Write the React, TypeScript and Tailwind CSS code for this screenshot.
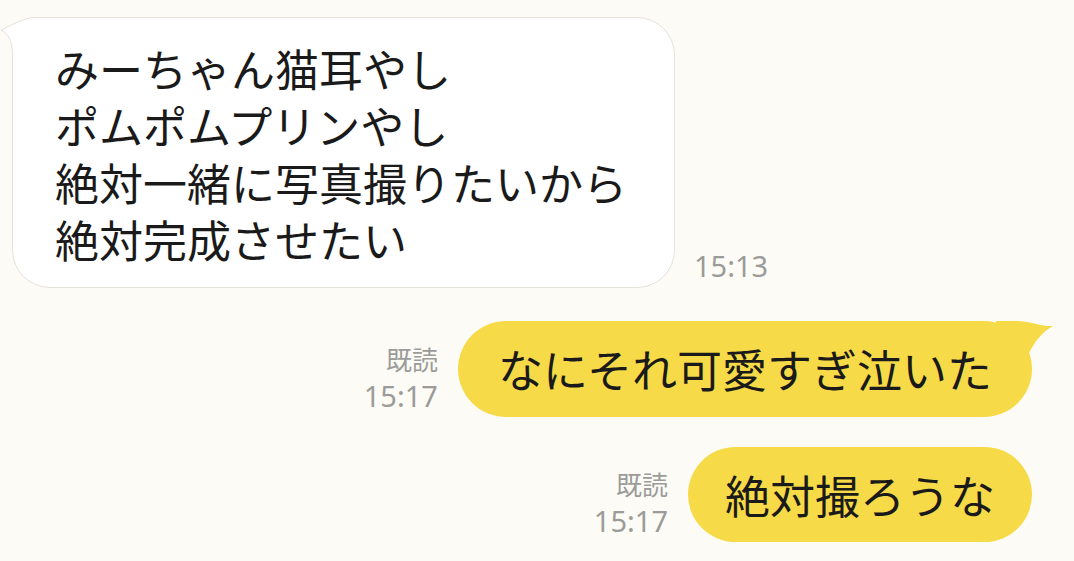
const jp = "font-['Noto_Sans_CJK_JP','Noto_Sans',sans-serif]";

const incoming = ["みーちゃん猫耳やし", "ポムポムプリンやし", "絶対一緒に写真撮りたいから", "絶対完成させたい"];

const ReadMark = ({ time }: { time: string }) => (
  <div className={`mr-[20px] mb-[3px] text-right text-[#9b9b99] ${jp}`}>
    <div className="text-[26px] leading-[37px]">既読</div>
    <div className="text-[29px] leading-[37px] font-['Noto_Sans',sans-serif]">{time}</div>
  </div>
);

export default function App() {
  return (
    <div className={`w-[1074px] h-[561px] overflow-hidden bg-[#fcfbf5] flex flex-col ${jp}`}>
      {/* received */}
      <div className="flex items-end pt-[17px] pl-[12px]">
        <div className="relative bg-white border border-[#e4e2da] rounded-[38px] pl-[42px] pr-[47px] pt-[22px] pb-[19px] text-[44px] leading-[57px] text-[#1a1a1a]">
          <svg className="absolute left-[-13px] top-[-1px]" width="52" height="52" viewBox="0 0 52 52">
            <path d="M52 0.5 L34 0.5 C24 1 12 8 1 13 C8 16 12 24 12.5 36 L12.5 52 L52 52 Z" fill="#fff" />
            <path d="M52 0.5 L34 0.5 C24 1 12 8 1 13 C8 16 12 24 12.5 36 L12.5 52" fill="none" stroke="#e4e2da" strokeWidth="1" />
          </svg>
          <div className="relative">
            {incoming.map((l) => (
              <div key={l}>{l}</div>
            ))}
          </div>
        </div>
        <div className="ml-[19px] mb-[5px] text-[29px] leading-[34px] text-[#9b9b99] font-['Noto_Sans',sans-serif]">15:13</div>
      </div>

      {/* sent */}
      <div className="flex justify-end items-end pr-[42px] mt-[33px]">
        <ReadMark time="15:17" />
        <div className="relative h-[96px] rounded-full bg-[#f7da47] px-[40px] flex items-center text-[45px] text-[#1a1a1a]">
          <svg className="absolute right-[-24px] top-0" width="60" height="40" viewBox="0 0 60 40">
            <path d="M0 0 L20 0 C34 0 46 6 57 5 C48 10 40 18 33 32 L0 32 Z" fill="#f7da47" />
          </svg>
          <span className="relative">なにそれ可愛すぎ泣いた</span>
        </div>
      </div>

      <div className="flex justify-end items-end pr-[42px] mt-[30px]">
        <ReadMark time="15:17" />
        <div className="h-[95px] rounded-full bg-[#f7da47] px-[37px] flex items-center text-[45px] text-[#1a1a1a]">
          絶対撮ろうな
        </div>
      </div>
    </div>
  );
}
